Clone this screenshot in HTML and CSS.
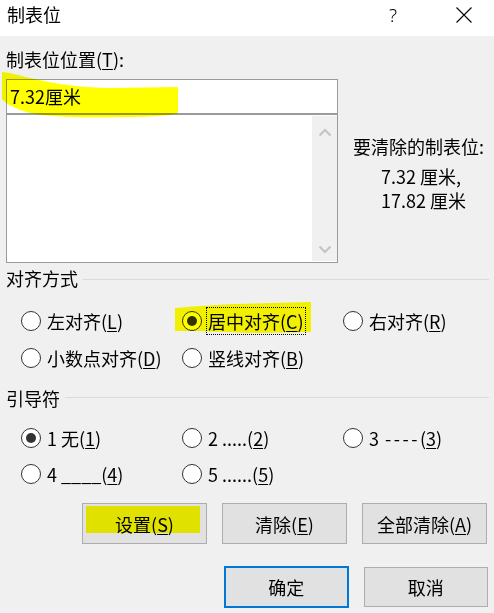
FILE: index.html
```html
<!DOCTYPE html>
<html lang="zh-CN">
<head>
<meta charset="utf-8">
<title>制表位</title>
<link rel="stylesheet" href="styles.css">
</head>
<body>
<div class="titlebar">
  <div class="title">制表位</div>
  <div class="help">?</div>
  <svg class="close" width="16" height="16" viewBox="0 0 16 16"><path d="M0.5 0.5 L15.5 15.5 M15.5 0.5 L0.5 15.5" stroke="#000" stroke-width="1.1" fill="none"/></svg>
</div>
<div class="content">
  <div class="label">制表位位置(<u>T</u>):</div>
  <div class="input">7.32厘米</div>
  <div class="main">
    <div class="list">
      <div class="list-body"></div>
      <div class="scrollbar">
        <svg width="14" height="10" viewBox="0 0 14 10"><path d="M1.5 8.5 L7 3 L12.5 8.5" stroke="#c4c4c4" stroke-width="2.2" fill="none"/></svg>
        <svg width="14" height="10" viewBox="0 0 14 10"><path d="M1.5 1.5 L7 7 L12.5 1.5" stroke="#c4c4c4" stroke-width="2.2" fill="none"/></svg>
      </div>
    </div>
    <div class="clear-info">
      <div class="clear-title">要清除的制表位:</div>
      <div class="clear-items">
        <div>7.32 厘米,</div>
        <div>17.82 厘米</div>
      </div>
    </div>
  </div>

  <div class="group">对齐方式</div>
  <div class="options">
    <div class="radio"><span class="dot"></span><span>左对齐(<u>L</u>)</span></div>
    <div class="radio"><span class="dot checked"></span><span class="focus">居中对齐(<u>C</u>)</span></div>
    <div class="radio"><span class="dot"></span><span>右对齐(<u>R</u>)</span></div>
    <div class="radio"><span class="dot"></span><span>小数点对齐(<u>D</u>)</span></div>
    <div class="radio"><span class="dot"></span><span>竖线对齐(<u>B</u>)</span></div>
  </div>

  <div class="group group-leader">引导符</div>
  <div class="options leaders">
    <div class="radio"><span class="dot checked"></span><span>1 无(<u>1</u>)</span></div>
    <div class="radio"><span class="dot"></span><span>2 .....(<u>2</u>)</span></div>
    <div class="radio"><span class="dot"></span><span>3 <span class="dashes">----</span>(<u>3</u>)</span></div>
    <div class="radio"><span class="dot"></span><span>4 ____(<u>4</u>)</span></div>
    <div class="radio"><span class="dot"></span><span>5 ......(<u>5</u>)</span></div>
  </div>

  <div class="buttons">
    <div class="btn">设置(<u>S</u>)</div>
    <div class="btn">清除(<u>E</u>)</div>
    <div class="btn">全部清除(<u>A</u>)</div>
  </div>
  <div class="buttons buttons-main">
    <div class="btn btn-default">确定</div>
    <div class="btn">取消</div>
  </div>
</div>

<svg class="marks" width="494" height="613" viewBox="0 0 494 613">
  <path fill="#ffff00" d="M2,72 L10,73 C30,78 60,87 110,88 L178,87 L178,113 C170,116 150,117 120,117 C80,118 50,117 30,113 C15,109 5,103 2,99 Z"/>
  <path fill="#ffff00" d="M175,308 C195,306 215,305 235,304 L311,302 L311,332 L250,333 L200,331 L175,331 Z"/>
  <path fill="#ffff00" d="M86,506 L200,506 L200,533 L86,533 Z"/>
</svg>
</body>
</html>
```

FILE: styles.css
```css
* { box-sizing: border-box; }

html, body {
  margin: 0;
  padding: 0;
}

body {
  width: 494px;
  height: 613px;
  overflow: hidden;
  position: relative;
  background: #f0f0f0;
  color: #000;
  font-family: "Noto Sans CJK SC", "Noto Sans", sans-serif;
  font-size: 18px;
}

u { text-decoration: underline; text-underline-offset: 2px; text-decoration-thickness: 1px; }

.titlebar {
  height: 36px;
  background: #fff;
  display: flex;
  align-items: flex-start;
  padding-left: 7px;
}

.title {
  flex: 1;
  line-height: 29px;
}

.help {
  width: 16px;
  text-align: center;
  line-height: 30px;
  margin-right: 55px;
  font-family: "Noto Sans", sans-serif;
  font-size: 19px;
  font-weight: 300;
}

.close {
  margin-top: 7px;
  margin-right: 22px;
}

.content {
  padding: 11px 6px 0 6px;
}

.label {
  line-height: 24px;
  margin-bottom: 8px;
}

.input {
  width: 332px;
  height: 35px;
  border: 1px solid #9a9a9a;
  background: #fff;
  padding-left: 3px;
  line-height: 32px;
}

.main {
  display: flex;
}

.list {
  width: 332px;
  height: 149px;
  border: 1px solid #9a9a9a;
  background: #fff;
  display: flex;
}

.list-body { flex: 1; }

.scrollbar {
  width: 25px;
  margin: 1px 0 1px 0;
  background: #f0f0f0;
  display: flex;
  flex-direction: column;
  justify-content: space-between;
  align-items: center;
  padding: 11px 0 6px 0;
}

.clear-info {
  margin-left: 15px;
  padding-top: 20px;
}

.clear-title {
  line-height: 24px;
}

.clear-items {
  margin-top: 6px;
  padding-left: 28px;
  line-height: 24px;
}

.group {
  margin-top: 3px;
  line-height: 24px;
  display: flex;
  align-items: center;
}

.group::after {
  content: "";
  flex: 1;
  height: 1px;
  background: #dadada;
  margin-left: 5px;
  margin-top: 3px;
  margin-right: -1px;
}

.group-leader { margin-top: 10px; }
.group-leader::after { margin-top: -1px; margin-left: 5px; }

.options {
  margin-top: 12px;
  padding-left: 15px;
  display: grid;
  grid-template-columns: 161px 161px 161px;
  grid-auto-rows: 37px;
}

.leaders {
  margin-top: 10px;
  grid-auto-rows: 36px;
}

.radio {
  display: flex;
  align-items: center;
  gap: 6px;
  white-space: nowrap;
  line-height: 24px;
}

.dashes {
  letter-spacing: 2.5px;
  margin-left: 2px;
}

.dot {
  width: 20px;
  height: 20px;
  flex: none;
  border: 1px solid #333;
  border-radius: 50%;
  background: #fff;
  display: flex;
  align-items: center;
  justify-content: center;
}

.dot.checked::after {
  content: "";
  width: 10px;
  height: 10px;
  border-radius: 50%;
  background: #333;
}

.focus {
  outline: 1px dotted #000;
  outline-offset: 1px;
}

.buttons {
  margin-top: 11px;
  margin-left: 76px;
  display: flex;
  gap: 15px;
  align-items: center;
}

.buttons-main {
  margin-top: 22px;
  margin-left: 218px;
}

.btn {
  width: 125px;
  height: 41px;
  background: #e1e1e1;
  border: 1px solid #adadad;
  display: flex;
  align-items: center;
  justify-content: center;
  line-height: 24px;
}

.btn-default {
  height: 42px;
  border: 2px solid #0078d7;
}

.buttons-main .btn:not(.btn-default) {
  height: 40px;
}

.marks {
  position: absolute;
  left: 0;
  top: 0;
  pointer-events: none;
  mix-blend-mode: multiply;
}
```
